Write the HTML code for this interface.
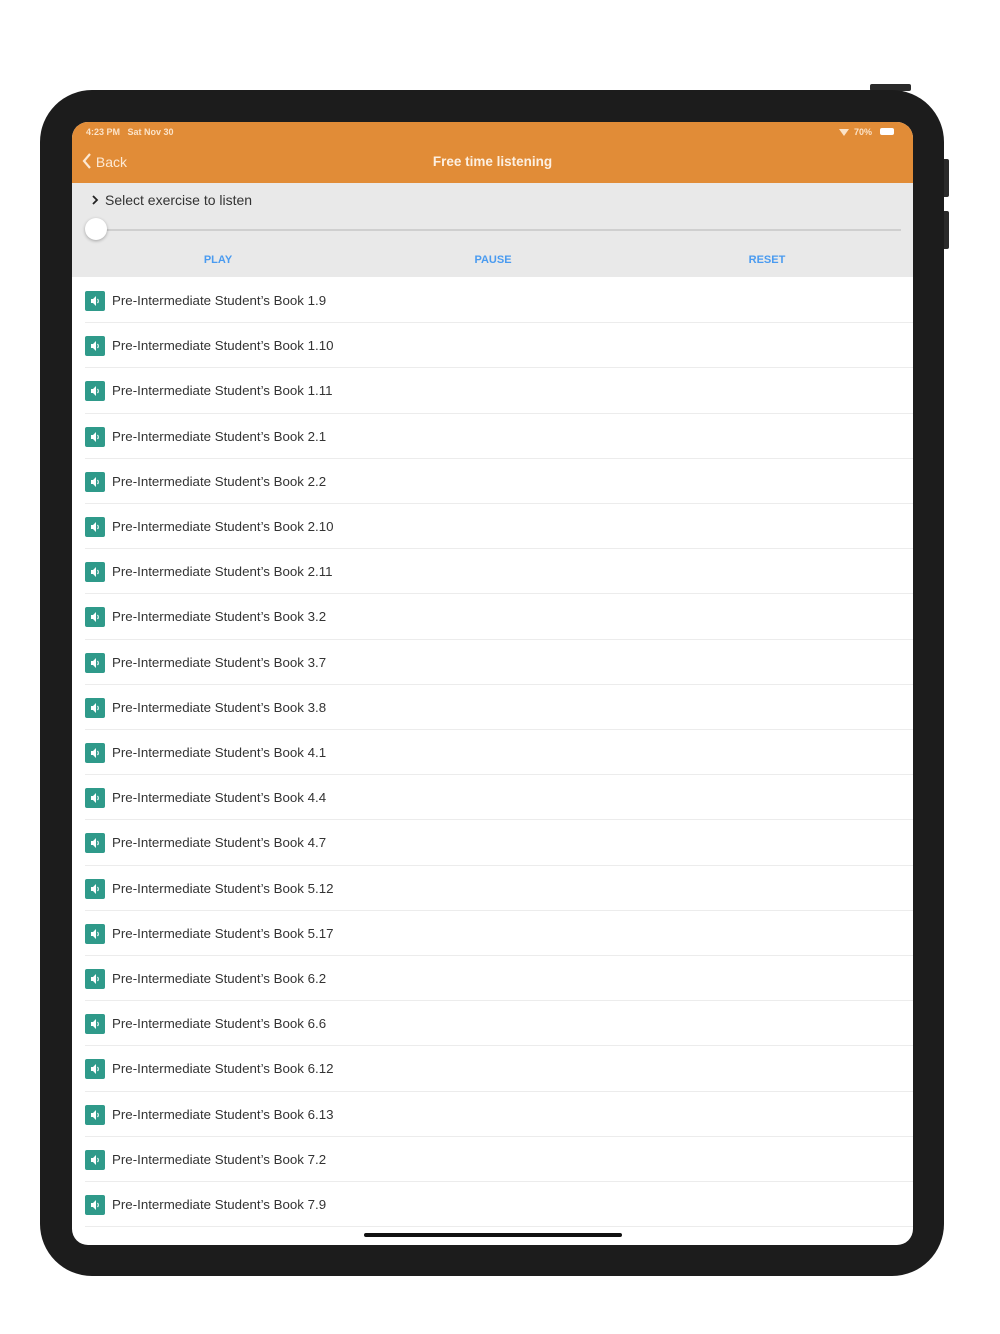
<!DOCTYPE html>
<html><head><meta charset="utf-8"><style>
*{margin:0;padding:0;box-sizing:border-box}
body{width:1000px;height:1334px;background:#fff;position:relative;overflow:hidden;font-family:"Liberation Sans",sans-serif}
.frame{position:absolute;left:40px;top:90px;width:904px;height:1186px;background:#1c1c1c;border-radius:52px}
.btn{position:absolute;background:#2a2a2a}
.screen{position:absolute;left:72px;top:122px;width:841px;height:1123px;background:#fff;border-radius:16px;overflow:hidden}
.hdr{position:absolute;left:0;top:0;width:841px;height:61px;background:#e18c37;color:#fff}
.status{position:absolute;top:5px;font-size:9px;font-weight:bold;color:#fbe3c8}
.back{position:absolute;left:10px;top:31px;font-size:14px;color:#fde9d4}
.title{position:absolute;left:0;width:841px;text-align:center;top:32px;font-size:13.5px;font-weight:bold;color:#fdf0e2}
.panel{position:absolute;left:0;top:61px;width:841px;height:94px;background:#e9e9e9}
.sel{position:absolute;left:19px;top:9px;font-size:14px;color:#333}
.track{position:absolute;left:24px;top:46px;width:805px;height:2px;background:#cfcfcf}
.knob{position:absolute;left:13px;top:35px;width:22px;height:22px;border-radius:50%;background:#fff;box-shadow:0 1px 3px rgba(0,0,0,.3)}
.b{position:absolute;top:71px;font-size:11px;color:#4a9bf0;font-weight:bold;transform:translateX(-50%)}
.row{position:absolute;left:0;width:841px;height:45.2px}
.row .ic{position:absolute;left:13px;top:13px;width:20px;height:20px;background:#2f9a8a;border-radius:2px}
.row .t{position:absolute;left:40px;top:15px;font-size:13.3px;color:#333}
.row .ln{position:absolute;left:13px;right:0;bottom:0;height:1px;background:#ececec}
.home{position:absolute;left:292px;top:1111px;width:258px;height:4px;border-radius:2px;background:#111}
</style></head><body>
<div class="btn" style="left:870px;top:84px;width:41px;height:7px;border-radius:2px"></div>
<div class="btn" style="left:942px;top:159px;width:7px;height:38px;border-radius:2px"></div>
<div class="btn" style="left:942px;top:211px;width:7px;height:38px;border-radius:2px"></div>
<div class="frame"></div>
<div class="screen">
 <div class="hdr">
  <div class="status" style="left:14px">4:23 PM &nbsp; Sat Nov 30</div>
  <div class="status" style="left:782px">70%</div>
  <div style="position:absolute;left:767px;top:7px;width:0;height:0;border-left:5px solid transparent;border-right:5px solid transparent;border-top:7px solid #fbe3c8"></div>
  <div style="position:absolute;left:808px;top:6px;width:14px;height:7px;background:#fff;border-radius:2px"></div>
  <div class="back"><svg width="10" height="16" viewBox="0 0 10 16" style="vertical-align:-2px"><path d="M8 1L2 8l6 7" stroke="#fde9d4" stroke-width="2.2" fill="none"/></svg> Back</div>
  <div class="title">Free time listening</div>
 </div>
 <div class="panel">
  <div class="sel"><svg width="8" height="10" viewBox="0 0 8 10" style="margin-right:6px"><path d="M2 1l4 4-4 4" stroke="#222" stroke-width="1.8" fill="none"/></svg>Select exercise to listen</div>
  <div class="track"></div><div class="knob"></div>
  <div class="b" style="left:146px">PLAY</div>
  <div class="b" style="left:421px">PAUSE</div>
  <div class="b" style="left:695px">RESET</div>
 </div>
 <div id="list"></div>
 <div class="home"></div>
</div>
<script>
var n=["1.9","1.10","1.11","2.1","2.2","2.10","2.11","3.2","3.7","3.8","4.1","4.4","4.7","5.12","5.17","6.2","6.6","6.12","6.13","7.2","7.9"],h="";
n.forEach(function(v,i){h+='<div class="row" style="top:'+(156+i*45.2)+'px"><div class="ic"><svg width="20" height="20" viewBox="0 0 20 20"><path d="M6 8h2l3-3v10l-3-3H6z" fill="#fff"/><path d="M12.5 8a3 3 0 0 1 0 4" stroke="#fff" stroke-width="1.2" fill="none"/></svg></div><div class="t">Pre-Intermediate Student\u2019s Book '+v+'</div><div class="ln"></div></div>';});
document.getElementById("list").innerHTML=h;
</script>
</body></html>
